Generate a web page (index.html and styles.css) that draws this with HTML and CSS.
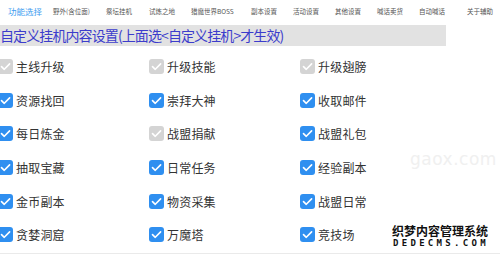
FILE: index.html
```html
<!DOCTYPE html>
<html lang="zh">
<head>
    <meta charset="UTF-8">
    <title>自定义挂机</title>
    <link rel="stylesheet" href="styles.css">
</head>
<body>
    <nav class="tabs">
        <a class="tab active" href="#">功能选择</a>
        <a class="tab" href="#">野外(含位面)</a>
        <a class="tab" href="#">祭坛挂机</a>
        <a class="tab" href="#">试炼之地</a>
        <a class="tab" href="#">猎魔世界BOSS</a>
        <a class="tab" href="#">副本设置</a>
        <a class="tab" href="#">活动设置</a>
        <a class="tab" href="#">其他设置</a>
        <a class="tab" href="#">喊话卖货</a>
        <a class="tab" href="#">自动喊话</a>
        <a class="tab" href="#">关于辅助</a>
    </nav>

    <h2 class="title">自定义挂机内容设置(上面选&lt;自定义挂机&gt;才生效)</h2>

    <ul class="options" id="options"></ul>

    <div class="watermark">
        <span class="wm-site">gaox.com</span>
        <span class="wm-cn">织梦内容管理系统</span>
        <span class="wm-en">DEDECMS.COM</span>
    </div>

    <script>
        // off = 灰色不可选
        const items = [
            ['主线升级', 'off'], ['升级技能', 'off'], ['升级翅膀', 'off'],
            ['资源找回', 'on'], ['崇拜大神', 'on'], ['收取邮件', 'on'],
            ['每日炼金', 'on'], ['战盟捐献', 'off'], ['战盟礼包', 'on'],
            ['抽取宝藏', 'on'], ['日常任务', 'on'], ['经验副本', 'on'],
            ['金币副本', 'on'], ['物资采集', 'on'], ['战盟日常', 'on'],
            ['贪婪洞窟', 'on'], ['万魔塔', 'on'], ['竞技场', 'on']
        ];

        const check = '<svg viewBox="0 0 15 15" width="15" height="15"><path d="M3.5 7.6 L6.3 10.3 L11.6 4.9" fill="none" stroke="#fff" stroke-width="1.6" stroke-linecap="round" stroke-linejoin="round"/></svg>';
        const list = document.getElementById('options');

        items.forEach(([name, state]) => {
            const li = document.createElement('li');
            li.className = 'option';
            li.innerHTML = '<span class="box ' + state + '">' + check + '</span><span class="label">' + name + '</span>';
            list.appendChild(li);
        });
    </script>
</body>
</html>
```

FILE: styles.css
```css
body {
    margin: 0;
    font-family: "Noto Sans CJK SC", "Noto Sans", sans-serif;
    color: #333;
    background-color: #fff;
    width: 500px;
    height: 258px;
    overflow: hidden;
    position: relative;
}

.tabs {
    display: grid;
    grid-template-columns: 45px 53px 43px 42px 60px 42px 42px 42px 42px 48px 33px;
    align-items: center;
    height: 22px;
    padding-left: 8px;
}

.tab {
    font-size: 6.5px;
    color: #555;
    text-decoration: none;
    white-space: nowrap;
}

.tab.active {
    font-size: 8.5px;
    color: #3d9cf0;
}

.title {
    margin: 3px 0 0;
    width: 446px;
    height: 21px;
    line-height: 21px;
    background-color: #e2e2e2;
    color: #3c3ccc;
    font-size: 14px;
    font-weight: normal;
    white-space: nowrap;
    letter-spacing: -0.9px;
}

.options {
    list-style: none;
    margin: 0 0 0 -2px;
    padding: 4px 0 0;
    display: grid;
    grid-template-columns: repeat(3, 151px);
    grid-auto-rows: 33.6px;
}

.option {
    display: flex;
    align-items: center;
    height: 33.6px;
}

.box {
    width: 15px;
    height: 15px;
    border-radius: 3px;
    flex-shrink: 0;
}

.box svg {
    display: block;
}

.box.on {
    background-color: #2f8ff0;
}

.box.off {
    background-color: #d4d4d4;
}

.label {
    margin-left: 3px;
    font-size: 12px;
    letter-spacing: 0.2px;
    color: #333;
}

.watermark {
    position: absolute;
    left: 0;
    top: 253px;
    width: 500px;
    height: 1px;
    background-color: #eaeaea;
}

.wm-site {
    position: absolute;
    left: 410px;
    top: -104px;
    font-family: "DejaVu Sans", sans-serif;
    font-size: 17px;
    color: #f0f0f0;
    letter-spacing: 0.5px;
}

.wm-cn {
    position: absolute;
    left: 392px;
    top: -31px;
    font-size: 12px;
    font-weight: bold;
    color: #111;
    letter-spacing: 0;
    text-shadow: 1px 0 #fff, -1px 0 #fff, 0 1px #fff, 0 -1px #fff;
    white-space: nowrap;
}

.wm-en {
    position: absolute;
    left: 393px;
    top: -15px;
    font-family: "DejaVu Sans Mono", monospace;
    font-size: 9px;
    font-weight: bold;
    color: #111;
    letter-spacing: 3.3px;
    white-space: nowrap;
}
```
